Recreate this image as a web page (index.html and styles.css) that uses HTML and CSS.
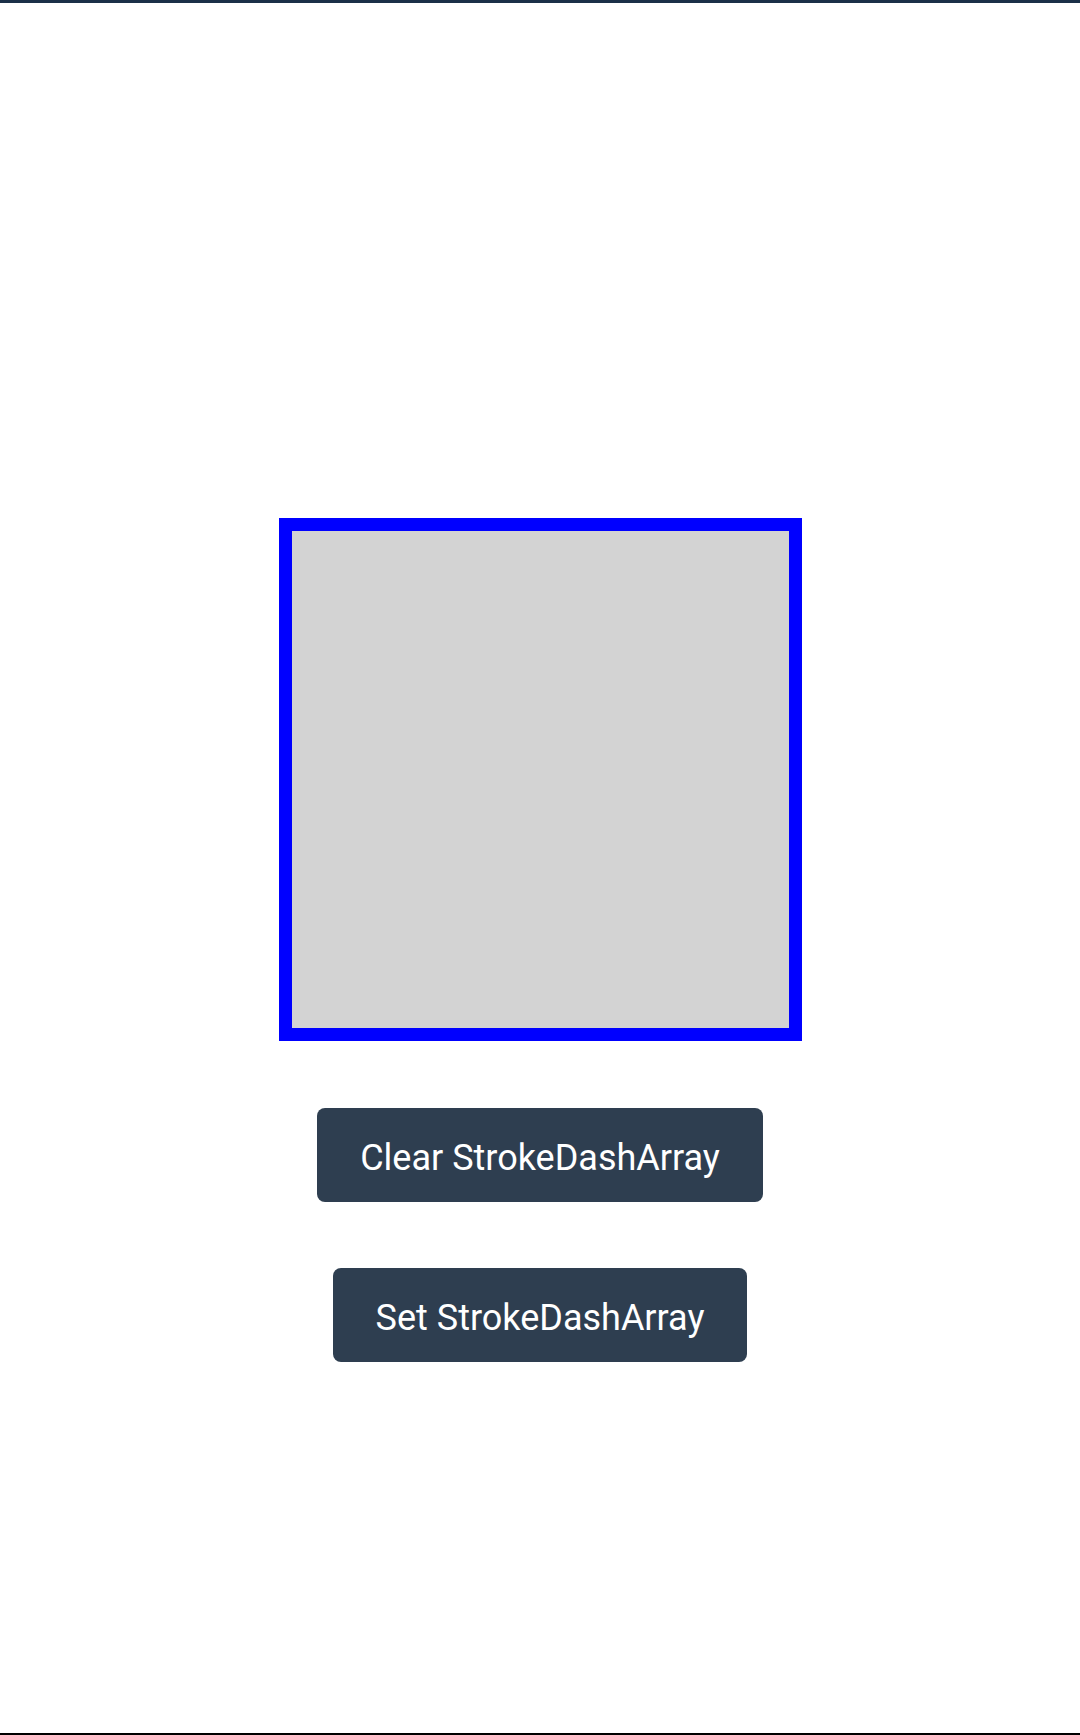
FILE: index.html
```html
<!DOCTYPE html>
<html>
<head>
<meta charset="utf-8">
<link rel="stylesheet" href="styles.css">
</head>
<body>
<div class="page">
  <div class="topbar"></div>
  <main class="content">
    <div class="square"></div>
    <button class="btn">Clear StrokeDashArray</button>
    <button class="btn">Set StrokeDashArray</button>
  </main>
  <div class="bottombar"></div>
</div>
</body>
</html>
```

FILE: styles.css
```css
html, body {
  margin: 0;
  padding: 0;
  background: #ffffff;
}
.page {
  height: 1735px;
  display: flex;
  flex-direction: column;
}
.topbar {
  height: 3px;
  background: #1b3048;
}
.content {
  flex: 1;
  display: flex;
  flex-direction: column;
  align-items: center;
  padding-top: 515px;
  gap: 66px;
}
.square {
  width: 523px;
  height: 523px;
  box-sizing: border-box;
  border: 13px solid #0000ff;
  background: #d3d3d3;
  margin-bottom: 1px;
}
.btn {
  box-sizing: border-box;
  height: 94px;
  padding: 6px 43px 0;
  border: none;
  border-radius: 8px;
  background: #2e3e50;
  color: #ffffff;
  font-family: Roboto, "Liberation Sans", sans-serif;
  font-size: 36px;
  line-height: 88px;
}
.bottombar {
  height: 2px;
  background: #000000;
}
```
